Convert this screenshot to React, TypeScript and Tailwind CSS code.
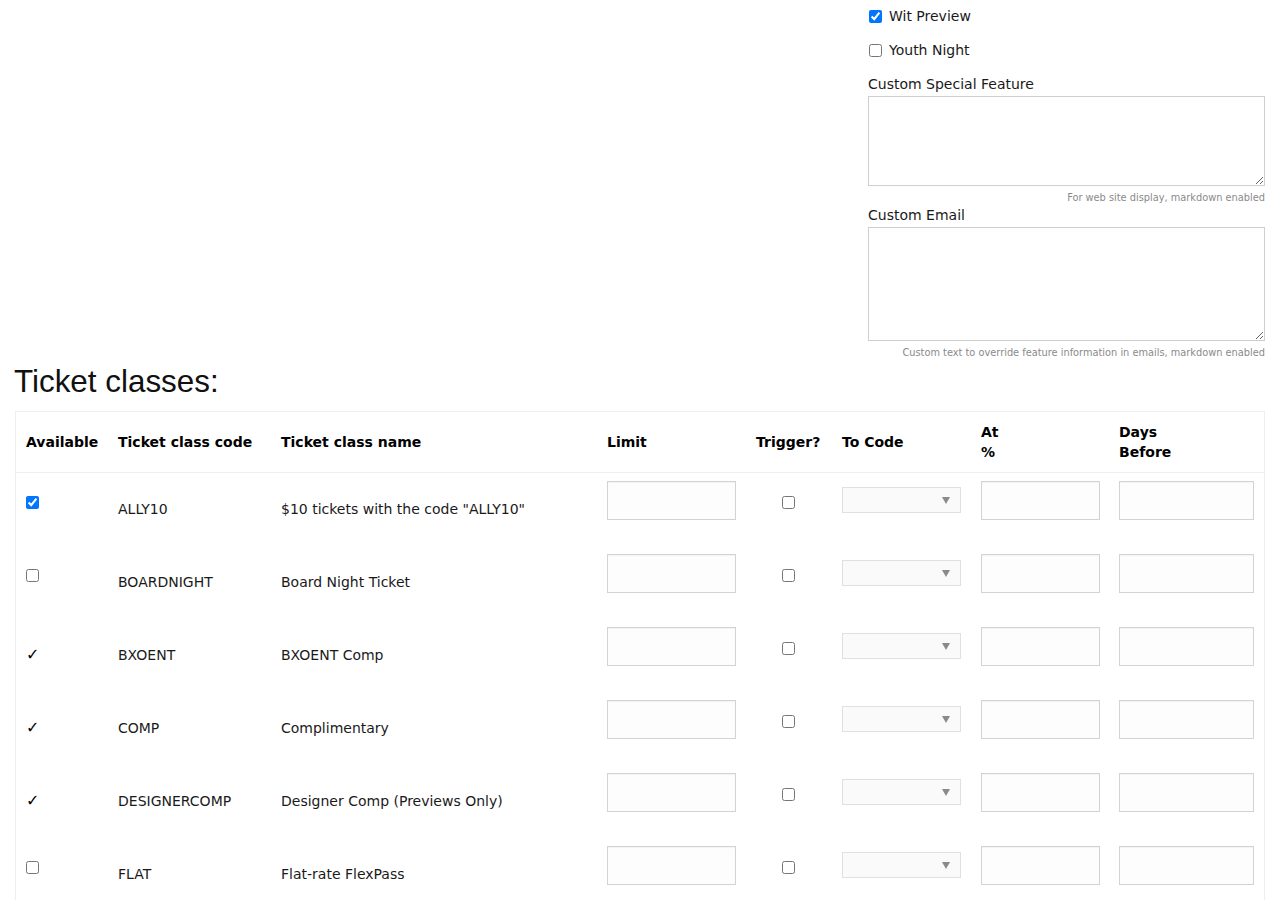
import React from "react";

type Avail = "checked" | "unchecked" | "mark";

const rows: { avail: Avail; code: string; name: string }[] = [
  { avail: "checked", code: "ALLY10", name: '$10 tickets with the code "ALLY10"' },
  { avail: "unchecked", code: "BOARDNIGHT", name: "Board Night Ticket" },
  { avail: "mark", code: "BXOENT", name: "BXOENT Comp" },
  { avail: "mark", code: "COMP", name: "Complimentary" },
  { avail: "mark", code: "DESIGNERCOMP", name: "Designer Comp (Previews Only)" },
  { avail: "unchecked", code: "FLAT", name: "Flat-rate FlexPass" },
];

const gridCols =
  "grid grid-cols-[92px_163px_326px_149px_86px_139px_138px_155px]";

function TextInput({ width }: { width: string }) {
  return (
    <input
      type="text"
      className={`${width} h-[39px] border border-[#d3d3d3] bg-[#fdfdfd] shadow-[inset_0_1px_1px_rgba(0,0,0,0.04)] outline-none`}
    />
  );
}

function CodeSelect() {
  return (
    <div className="relative w-[119px] h-[26px] border border-[#e0e0e0] bg-[#fafafa]">
      <svg
        className="absolute right-[10px] top-[9px]"
        width="8"
        height="7"
        viewBox="0 0 8 7"
      >
        <path d="M0 0 H8 L4 7 Z" fill="#8a8a8a" />
      </svg>
    </div>
  );
}

export default function App() {
  return (
    <div
      className="min-h-[900px] bg-white text-[14px] text-[#1a1a1a]"
      style={{ fontFamily: '"DejaVu Sans", Verdana, sans-serif' }}
    >
      {/* extra options panel */}
      <div className="flex justify-end pr-[15px]">
        <div className="w-[397px] pt-[6px]">
          <label className="flex items-center h-[20px] mb-[14px]">
            <input type="checkbox" defaultChecked className="ml-[1px] w-[13px] h-[13px]" />
            <span className="ml-[7px] leading-[20px]">Wit Preview</span>
          </label>
          <label className="flex items-center h-[20px] mb-[14px]">
            <input type="checkbox" className="ml-[1px] w-[13px] h-[13px]" />
            <span className="ml-[7px] leading-[20px]">Youth Night</span>
          </label>
          <div className="leading-[20px]">Custom Special Feature</div>
          <textarea className="block mt-[2px] w-[397px] h-[90px] border border-[#cfcfcf] bg-white outline-none" />
          <div className="mt-[5px] text-right text-[9.8px] leading-[14px] text-[#8a8a8a]">
            For web site display, markdown enabled
          </div>
          <div className="mt-0 leading-[20px]">Custom Email</div>
          <textarea className="block mt-[2px] w-[397px] h-[114px] border border-[#cfcfcf] bg-white outline-none" />
          <div className="mt-[5px] text-right text-[9.8px] leading-[14px] text-[#8a8a8a]">
            Custom text to override feature information in emails, markdown enabled
          </div>
        </div>
      </div>

      <h2
        className="mt-[4px] ml-[14px] text-[31.4px] leading-[36px] text-[#111]"
        style={{ fontFamily: '"Liberation Sans", Arial, sans-serif' }}
      >
        Ticket classes:
      </h2>

      <div className="mt-[11px] ml-[15px] w-[1250px] border border-[#eeeeee] border-b-0">
        <div className={`${gridCols} h-[61px] border-b border-[#eeeeee] font-bold text-[14px] text-black`}>
          <div className="flex items-center pl-[10px]">Available</div>
          <div className="flex items-center pl-[10px]">Ticket class code</div>
          <div className="flex items-center pl-[10px]">Ticket class name</div>
          <div className="flex items-center pl-[10px]">Limit</div>
          <div className="flex items-center pl-[10px]">Trigger?</div>
          <div className="flex items-center pl-[10px]">To Code</div>
          <div className="flex items-center pl-[10px] leading-[20px]">
            At
            <br />%
          </div>
          <div className="flex items-center pl-[10px] leading-[20px]">
            Days
            <br />
            Before
          </div>
        </div>

        {rows.map((r) => (
          <div key={r.code} className={`${gridCols} h-[73px]`}>
            <div className="pl-[10px]">
              {r.avail === "mark" ? (
                <div className="pt-[26px] leading-[20px] text-[16px] text-black">✓</div>
              ) : (
                <div className="pt-[23px] flex">
                  <input
                    type="checkbox"
                    defaultChecked={r.avail === "checked"}
                    className="w-[13px] h-[13px]"
                  />
                </div>
              )}
            </div>
            <div className="pl-[10px] pt-[26px] leading-[20px]">{r.code}</div>
            <div className="pl-[10px] pt-[26px] leading-[20px]">{r.name}</div>
            <div className="pl-[10px] pt-[8px]">
              <TextInput width="w-[129px]" />
            </div>
            <div className="pt-[23px] pr-[1px] flex justify-center">
              <input type="checkbox" className="w-[13px] h-[13px]" />
            </div>
            <div className="pl-[10px] pt-[14px]">
              <CodeSelect />
            </div>
            <div className="pl-[10px] pt-[8px]">
              <TextInput width="w-[119px]" />
            </div>
            <div className="pl-[10px] pt-[8px]">
              <TextInput width="w-[135px]" />
            </div>
          </div>
        ))}
      </div>
    </div>
  );
}
